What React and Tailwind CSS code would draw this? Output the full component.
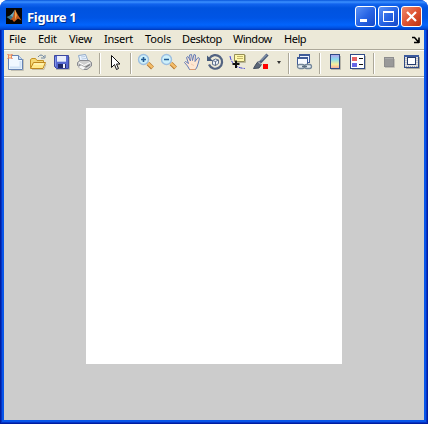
import React from 'react';

function Icon({ children, className = '' }) {
  return (
    <svg width="18" height="18" viewBox="0 0 18 18" className={'block shrink-0 ' + className} fill="none">
      {children}
    </svg>
  );
}

function Divider({ className = '' }) {
  return <div className={'h-[21px] w-[2px] shrink-0 border-l border-r border-l-[#aca899] border-r-white ' + className} />;
}

function NewIcon() {
  return (
    <Icon>
      <path d="M5 17.5H17.5V6" stroke="#c3c1b4" />
      <path d="M2.5 2.5H12.5L16.5 6.5V16.5H2.5Z" fill="#f0f8ff" stroke="#6684b3" />
      <path d="M12.5 2.5V6.5H16.5" fill="#c5d9f3" stroke="#6684b3" />
      <path d="M4 14.5H15M14.5 8V15" stroke="#cfe2f6" strokeWidth="2" />
      <path d="M1.5 1L6.5 6M6.5 1L1.5 6" stroke="#d4663e" />
      <rect x="2.5" y="2" width="3" height="3" fill="#ffe5a0" stroke="#e8845f" />
    </Icon>
  );
}

function OpenIcon() {
  return (
    <Icon>
      <path d="M9 4Q12 0 15 4M16 2V5H12" stroke="#6c84a0" />
      <path d="M1.5 15V6.5L3 5.5H6.5L8 7.5H14.5V10" fill="#f4d773" stroke="#c69325" />
      <path d="M1.5 15.5L4.5 9.5H16.5L14 15.5Z" fill="#ffe98b" stroke="#bd8720" />
      <path d="M5 11H14.5" stroke="#fff9cc" />
      <path d="M3 16.5H15L17 11" stroke="#c4bea8" />
    </Icon>
  );
}

function SaveIcon() {
  return (
    <Icon>
      <path d="M4 16.5H17.5V4" stroke="#b9b8ae" />
      <path d="M2.5 2.5H16.5V15.5H4.5L2.5 13.5Z" fill="#5668cf" stroke="#3c479d" />
      <rect x="5" y="3" width="9" height="6" fill="#e8edfb" />
      <path d="M5 8.5H14" stroke="#b9c6ed" />
      <rect x="6" y="11" width="8" height="4" fill="#202968" />
      <rect x="11" y="11" width="2" height="4" fill="#f4f4fb" />
      <path d="M3.5 4V13" stroke="#8294e8" />
    </Icon>
  );
}

function PrintIcon() {
  return (
    <Icon>
      <path d="M5 8L3.5 2.5L10.5 1.5L13 8Z" fill="#edf5ff" stroke="#8ea8c8" />
      <path d="M6 4L10 3.5M6.5 6L11 5.5" stroke="#b7cce3" />
      <path d="M2.5 9.5L5 7.5H14L16.5 9.5V13L12 16.5H9L2.5 12.5Z" fill="#cecece" stroke="#888a90" />
      <path d="M4 9.5L9 12.5L15 9.5" stroke="#fff" />
      <path d="M4 12L10 14.5L15 11.5" stroke="#77797d" strokeWidth="1.4" />
      <path d="M3 14L6 12L11 14.5L8 17Z" fill="#f7f7f7" stroke="#aaa" strokeWidth=".6" />
    </Icon>
  );
}

function ArrowIcon({ className }) {
  return (
    <Icon className={className}>
      <path d="M4.5 2.5V14.5L7.5 11.5L9.5 16.5L11.5 15.5L9.5 11H13Z" fill="#fff" stroke="#111" />
    </Icon>
  );
}

function ZoomIcon({ plus }) {
  return (
    <Icon>
      <path d="M11 10.5L15.5 15" stroke="#b87932" strokeWidth="4" />
      <path d="M10.5 10L15.5 14.5" stroke="#f4bd68" strokeWidth="2.4" />
      <circle cx="6.5" cy="6.5" r="5" fill="#cdf0fb" stroke="#9dbfdf" strokeWidth="1.4" />
      <path d="M4 6.5H9" stroke="#235b93" strokeWidth="1.6" />
      {plus && <path d="M6.5 4V9" stroke="#235b93" strokeWidth="1.6" />}
    </Icon>
  );
}

function HandIcon() {
  return (
    <Icon>
      <path d="M6.5 16.5L4.5 13L1.5 9.5L2.5 8.5L5.5 10.5L3.5 4.5L5 3.5L7.5 8L6.5 2L8.5 1.5L9.5 7.5L11 1.5L12.5 2L12 8.5L15 4.5L16.5 5.5L15 11L14 14L12.5 16.5Z" fill="#ffe6d2" stroke="#637cb7" />
      <path d="M7 16.5H12.5" stroke="#d99972" />
      <path d="M8 11L11 12.5" stroke="#f2cdb0" />
    </Icon>
  );
}

function RotateIcon() {
  return (
    <Icon>
      <path d="M3.4 5.5A6.8 6.8 0 1 1 3 11.5" stroke="#536482" strokeWidth="2.2" />
      <path d="M1 2.5V8H7Z" fill="#455a7b" />
      <path d="M6.5 7.5L9.5 6L12.5 7V10.5L9.5 12.5L6.5 11.5Z" fill="#eef3fa" stroke="#60728d" />
      <path d="M6.5 7.5L9.5 8.5L12.5 7M9.5 8.5V12.5" stroke="#60728d" />
    </Icon>
  );
}

function CursorIcon() {
  return (
    <Icon>
      <path d="M1 3Q2 9 6 12Q9 15 16 15.5" stroke="#4040d8" strokeDasharray="4 1" />
      <path d="M7 9.5H16.5V2" stroke="#b9b69d" />
      <path d="M5.5 1.5H15.5V8.5H5.5Z" fill="#fff9ac" stroke="#958e55" />
      <path d="M8 3.5H14M8 5.5H14" stroke="#c5b66b" />
      <path d="M7 7.5V15M3.5 11H10.5" stroke="#111" strokeWidth="2" />
    </Icon>
  );
}

function BrushIcon() {
  return (
    <Icon>
      <path d="M8 9.5L15.5 1.5" stroke="#4b5c79" strokeWidth="3" />
      <path d="M9 7.5L15 1.5" stroke="#a5b5ca" />
      <path d="M6 8.5L9.5 11.5L7 15L1.5 15.5L3.5 12Z" fill="#5d6878" stroke="#404b5c" />
      <path d="M6 8.5L9 11.5" stroke="#d4d8df" />
      <rect x="11" y="11" width="5" height="5" fill="#f00" />
    </Icon>
  );
}

function LinkIcon() {
  return (
    <Icon>
      <rect x="4.5" y="1.5" width="10" height="8" fill="#eef4ff" stroke="#3f5b97" />
      <path d="M4 2H15" stroke="#3f5b97" strokeWidth="2" />
      <rect x="2.5" y="4.5" width="10" height="8" fill="#f8fbff" stroke="#3f5b97" />
      <path d="M2 5H13" stroke="#3f5b97" strokeWidth="2" />
      <rect x="2.5" y="11.5" width="7" height="4" rx="2" fill="#e6edf2" stroke="#75889a" strokeWidth="1.3" />
      <rect x="9.5" y="11.5" width="7" height="4" rx="2" fill="#e6edf2" stroke="#75889a" strokeWidth="1.3" />
      <path d="M7 13.5H12" stroke="#5a6e81" strokeWidth="1.3" />
    </Icon>
  );
}

function ColorbarIcon() {
  return (
    <Icon>
      <defs>
        <linearGradient id="spectrum" x1="0" y1="0" x2="0" y2="1">
          <stop stopColor="#b4a0ee" /><stop offset=".35" stopColor="#8bdceb" />
          <stop offset=".7" stopColor="#f5ee9c" /><stop offset="1" stopColor="#f5a59b" />
        </linearGradient>
      </defs>
      <path d="M5 16.5H14.5V3" stroke="#b7b5a9" />
      <rect x="4.5" y="1.5" width="9" height="14" fill="url(#spectrum)" stroke="#304b86" />
    </Icon>
  );
}

function LegendIcon() {
  return (
    <Icon>
      <path d="M3 16.5H16.5V3" stroke="#b7b5a9" />
      <rect x="1.5" y="1.5" width="14" height="14" fill="#fff" stroke="#304b86" />
      <rect x="3" y="4" width="5" height="4" fill="#e66464" />
      <rect x="3" y="10" width="5" height="4" fill="#6767e6" />
      <path d="M10 5.5H14M10 11.5H14" stroke="#111" />
    </Icon>
  );
}

function HideIcon() {
  return (
    <Icon>
      <path d="M5 14.5H14.5V6" stroke="#c3c1b8" />
      <rect x="4.5" y="4.5" width="9" height="9" fill="#999" stroke="#8d8d8d" />
      <path d="M5 5.5H13" stroke="#aaa" />
    </Icon>
  );
}

function DockIcon() {
  return (
    <Icon>
      <path d="M3 15.5H16.5V4" stroke="#aaa99f" />
      <rect x="1.5" y="2.5" width="14" height="12" fill="#e2e2e2" stroke="#304b86" />
      <path d="M1 3H16" stroke="#3c5b9e" strokeWidth="2" />
      <path d="M3 5V14M14 5V14M3 13.5H14" stroke="#a8a8a8" strokeDasharray="1 1" />
      <rect x="4.5" y="4.5" width="8" height="7" fill="#fff" stroke="#263c6d" />
    </Icon>
  );
}

function CaptionButton({ close, children }) {
  return (
    <button className={'flex h-[21px] w-[21px] items-center justify-center rounded-[3px] border border-white bg-gradient-to-br ' + (close ? 'from-[#ee886b] via-[#df5332] to-[#bd3210]' : 'from-[#5b91f5] via-[#2865e5] to-[#1648c8]')}>
      <svg width="19" height="19" viewBox="0 0 19 19" fill="none">{children}</svg>
    </button>
  );
}

const menus = [
  ['File', 'w-[29px]', 'tracking-[-0.1px]'],
  ['Edit', 'w-[31px]', 'tracking-[-0.25px]'],
  ['View', 'w-[35px]', 'tracking-[-0.3px]'],
  ['Insert', 'w-[41px]', 'tracking-[-0.25px]'],
  ['Tools', 'w-[37px]', 'tracking-[-0.15px]'],
  ['Desktop', 'w-[51px]', 'tracking-[-0.4px]'],
  ['Window', 'w-[51px]', 'tracking-[-0.5px]'],
  ['Help', 'w-[30px]', 'tracking-[-0.45px]'],
];

export default function App() {
  return (
    <div className="flex h-[424px] w-[428px] flex-col bg-white font-['Noto_Sans',sans-serif]">
      <div className="flex min-h-0 flex-1 flex-col overflow-hidden rounded-t-[8px] bg-[#0831d9]">
        <header className="flex h-[30px] shrink-0 items-center bg-[linear-gradient(to_bottom,#0755db_0px,#3c91ff_2px,#1264ee_4px,#0053df_8px,#0055e5_18px,#0264fc_25px,#0050e0_28px,#0037b8_30px)] pr-[6px] pl-[6px]">
          <svg width="16" height="16" viewBox="0 0 16 16" className="mt-[2px]">
            <rect width="16" height="16" fill="#050505" />
            <path d="M0.5 9L5 7L9 1.5L8 9L5 12Z" fill="#36738a" />
            <path d="M4 7.5L7 5L9 1.5L7 9Z" fill="#70a6b8" />
            <path d="M4 12L7 9L9 1.5L12 7L15.5 12.5L12 10.5L8 14L6 11.5Z" fill="#c45b20" />
            <path d="M9 1.5L11 7L9 12Z" fill="#f3a445" />
          </svg>
          <h1 className="mt-[3px] ml-[5px] text-[13px] leading-[16px] font-bold tracking-[-0.3px] text-white [text-shadow:1px_1px_0_#00318f]">Figure 1</h1>
          <div className="mt-[3px] ml-auto flex gap-[2px]">
            <CaptionButton><path d="M4 13.5H11" stroke="#fff" strokeWidth="3" /></CaptionButton>
            <CaptionButton><path d="M4.5 4.5H14.5V14.5H4.5ZM4 5.5H15" stroke="#fff" /><path d="M4 5H15" stroke="#fff" strokeWidth="2" /></CaptionButton>
            <CaptionButton close><path d="M5 5L14 14M14 5L5 14" stroke="#fff" strokeWidth="2.2" /></CaptionButton>
          </div>
        </header>
        <div className="flex min-h-0 flex-1 border-x border-b border-[#001ea0]">
          <div className="flex min-w-0 flex-1 border-x border-b border-x-[#0633c4] border-b-[#0633c4]">
            <div className="flex min-w-0 flex-1 flex-col border-x-2 border-b-2 border-[#0855e8] bg-[#ccc]">
              <nav className="flex h-[19px] shrink-0 items-start bg-[#ece9d8] pt-px pl-[5px] text-[11px] leading-[15px] text-black">
                {menus.map(([label, width, tracking]) => <span key={label} className={`shrink-0 whitespace-nowrap ${width} ${tracking}`}>{label}</span>)}
                <svg width="8" height="8" viewBox="0 0 8 8" className="mt-[5px] mr-[4px] ml-auto" fill="none">
                  <path d="M0 1.5H2.5L6 5.5M7 1.5V7M2 6.5H7" stroke="#000" strokeWidth="1.6" />
                </svg>
              </nav>
              <div className="h-[2px] shrink-0 border-t border-b border-t-[#aca899] border-b-white" />
              <div className="flex h-[25px] shrink-0 items-start bg-[#ece9d8] pt-[2px] pl-[2px]">
                <div className="flex gap-[5px]"><NewIcon /><OpenIcon /><SaveIcon /><PrintIcon /></div>
                <Divider className="ml-[6px]" />
                <ArrowIcon className="ml-[6px]" />
                <Divider className="ml-[5px]" />
                <div className="ml-[5px] flex gap-[5px]"><ZoomIcon plus /><ZoomIcon /><HandIcon /><RotateIcon /><CursorIcon /><BrushIcon /></div>
                <div className="mt-[8px] ml-[7px] h-0 w-0 border-x-[2.5px] border-t-[3px] border-x-transparent border-t-[#333]" />
                <Divider className="ml-[7px]" />
                <div className="ml-[5px]"><LinkIcon /></div>
                <Divider className="ml-[6px]" />
                <div className="ml-[5px] flex gap-[5px]"><ColorbarIcon /><LegendIcon /></div>
                <Divider className="ml-[6px]" />
                <div className="ml-[5px] flex gap-[5px]"><HideIcon /><DockIcon /></div>
              </div>
              <div className="h-[2px] shrink-0 border-t border-b border-t-[#aca899] border-b-white" />
              <main className="flex flex-1 justify-center pt-[30px]"><div className="h-[256px] w-[256px] bg-white" /></main>
            </div>
          </div>
        </div>
      </div>
    </div>
  );
}
